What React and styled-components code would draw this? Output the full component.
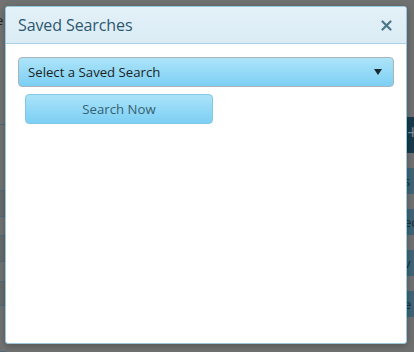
import styled, { createGlobalStyle } from "styled-components";

const GlobalStyle = createGlobalStyle`
  html, body {
    margin: 0;
    padding: 0;
    background: #6f7171;
  }
  body {
    font-family: "Open Sans", "Liberation Sans", sans-serif;
  }
`;

const Page = styled.div`
  width: 414px;
  height: 352px;
  position: relative;
  overflow: hidden;
  display: flex;
  justify-content: space-between;
  background: #6f7171;
`;

const LeftStrip = styled.div`
  width: 6px;
  display: flex;
  flex-direction: column;
`;

const LeftRow = styled.div`
  height: ${(p) => p.h}px;
  border-bottom: 1px solid #4f6a78;
  background: ${(p) => (p.dark ? "#666a6b" : "#727272")};
  color: #222;
  font-size: 13px;
  line-height: 40px;
  text-indent: -4px;
  overflow: hidden;
`;

const RightStrip = styled.div`
  width: 7px;
  display: flex;
  flex-direction: column;
  padding-top: 117px;
  gap: 15px;
`;

const DarkTab = styled.div`
  height: 36px;
  background: #173a4a;
  color: #7a8b92;
  font-size: 20px;
  line-height: 30px;
  overflow: hidden;
`;

const Pill = styled.div`
  height: 26px;
  background: #3e6476;
  color: #1c2c34;
  font-size: 13px;
  line-height: 26px;
  overflow: hidden;
  text-indent: -3px;
`;

const Modal = styled.div`
  position: absolute;
  left: 5px;
  top: 6px;
  width: 400px;
  height: 336px;
  background: #fff;
  border: 1px solid #97c7dd;
  border-radius: 3px;
  box-shadow: 0 2px 6px rgba(0, 0, 0, 0.25);
  display: flex;
  flex-direction: column;
  overflow: hidden;
`;

const Header = styled.div`
  height: 36px;
  flex-shrink: 0;
  display: flex;
  align-items: center;
  justify-content: space-between;
  padding: 0 13px 0 12px;
  background: linear-gradient(#e3f1f8, #dbecf5);
  border-bottom: 1px solid #a7d1e4;
`;

const Title = styled.h2`
  margin: 0;
  font-size: 16px;
  font-weight: 400;
  color: #2c5870;
  letter-spacing: -0.1px;
`;

const Close = styled.button`
  border: 0;
  background: none;
  padding: 0;
  width: 14px;
  height: 14px;
  display: flex;
  align-items: center;
  justify-content: center;
  cursor: pointer;
`;

const Body = styled.div`
  padding: 13px 12px;
  display: flex;
  flex-direction: column;
  align-items: flex-start;
  gap: 7px;
`;

const Select = styled.div`
  box-sizing: border-box;
  width: 376px;
  height: 30px;
  display: flex;
  align-items: center;
  justify-content: space-between;
  padding: 0 11px 0 9px;
  background: linear-gradient(#ade4f9, #7ccff4);
  border: 1px solid #a9b3b8;
  border-radius: 4px;
  color: #1b1f22;
  font-size: 13.2px;
`;

const Arrow = styled.span`
  width: 0;
  height: 0;
  border-left: 4px solid transparent;
  border-right: 4px solid transparent;
  border-top: 6px solid #1a2a33;
`;

const Button = styled.button`
  box-sizing: border-box;
  margin-left: 7px;
  width: 188px;
  height: 30px;
  background: linear-gradient(#abe3f9, #7ccff4);
  border: 1px solid #82c9e8;
  border-radius: 4px;
  color: #36616f;
  font-family: inherit;
  font-size: 13.2px;
  cursor: pointer;
`;

const leftRows = [
  { h: 127, t: "e" },
  { h: 66, t: "" },
  { h: 25, t: "", dark: true },
  { h: 19, t: "" },
  { h: 25, t: "", dark: true },
  { h: 20, t: "" },
  { h: 23, t: "", dark: true },
  { h: 46, t: "" },
];

const rightPills = ["s", "ec", "v", "e"];

function App() {
  return (
    <>
      <GlobalStyle />
      <Page>
        <LeftStrip>
          {leftRows.map((r, i) => (
            <LeftRow key={i} h={r.h} dark={r.dark}>
              {r.t}
            </LeftRow>
          ))}
        </LeftStrip>
        <RightStrip>
          <DarkTab>+</DarkTab>
          {rightPills.map((t, i) => (
            <Pill key={i}>{t}</Pill>
          ))}
        </RightStrip>

        <Modal>
          <Header>
            <Title>Saved Searches</Title>
            <Close aria-label="Close">
              <svg width="11" height="11" viewBox="0 0 11 11">
                <path
                  d="M1.5 1.5 L9.5 9.5 M9.5 1.5 L1.5 9.5"
                  stroke="#4b7689"
                  strokeWidth="2.2"
                  strokeLinecap="round"
                />
              </svg>
            </Close>
          </Header>
          <Body>
            <Select>
              <span>Select a Saved Search</span>
              <Arrow />
            </Select>
            <Button>Search Now</Button>
          </Body>
        </Modal>
      </Page>
    </>
  );
}

export default App;
